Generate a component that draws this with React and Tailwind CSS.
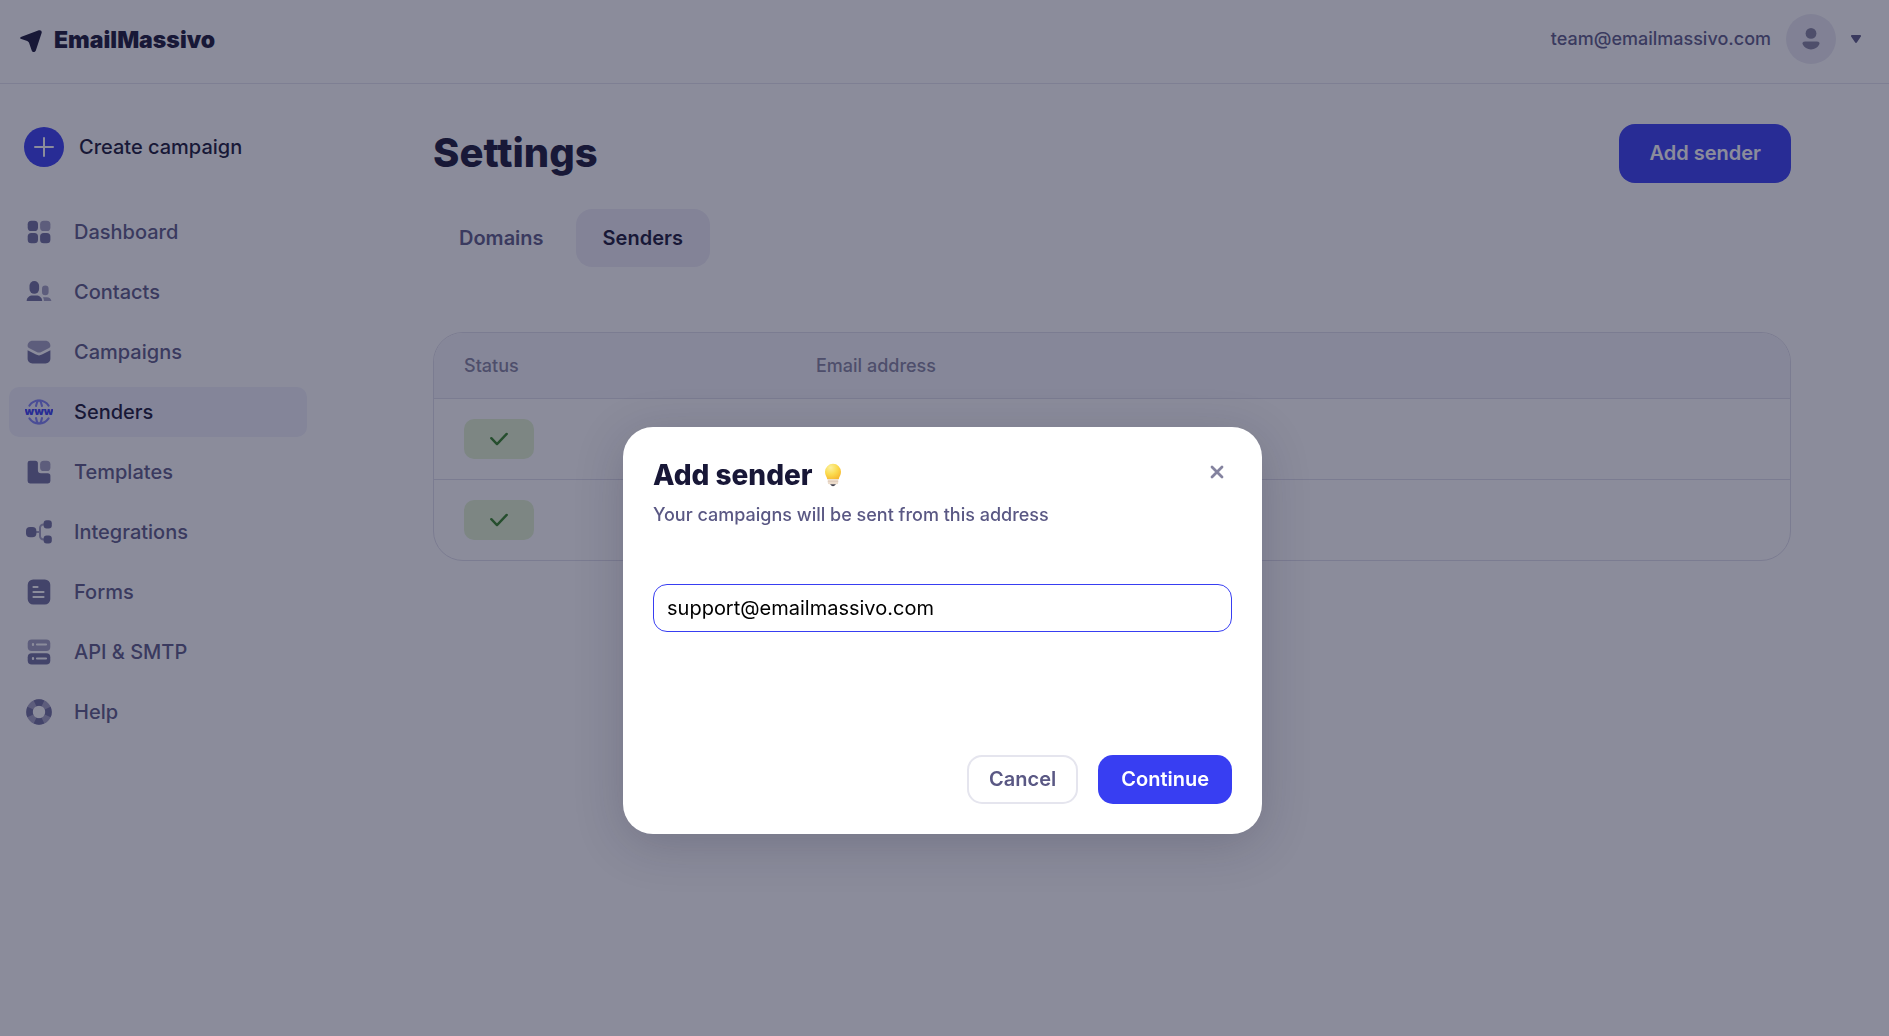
import { useState } from 'react';

const navItems = [
  { label: 'Dashboard', icon: DashboardIcon },
  { label: 'Contacts', icon: ContactsIcon },
  { label: 'Campaigns', icon: CampaignsIcon },
  { label: 'Senders', icon: SendersIcon },
  { label: 'Templates', icon: TemplatesIcon },
  { label: 'Integrations', icon: IntegrationsIcon },
  { label: 'Forms', icon: FormsIcon },
  { label: 'API & SMTP', icon: ApiIcon },
  { label: 'Help', icon: HelpIcon },
];

const senders = [{ id: 1 }, { id: 2 }];

function Icon({ children }) {
  return (
    <svg viewBox="0 0 28 28" className="w-7 h-7 shrink-0" fill="#6f6e9d" aria-hidden="true">
      {children}
    </svg>
  );
}

function DashboardIcon() {
  return (
    <Icon>
      <rect x="2.7" y="2.7" width="10.3" height="10.3" rx="3.6" />
      <rect x="15.1" y="2.7" width="10.3" height="10.3" rx="3.6" fill="#a3a1c0" />
      <rect x="2.7" y="15" width="10.3" height="10.3" rx="3.6" />
      <rect x="15.1" y="15" width="10.3" height="10.3" rx="3.6" />
    </Icon>
  );
}

function ContactsIcon() {
  return (
    <Icon>
      <rect x="4.5" y="3" width="9.6" height="12.8" rx="4.8" />
      <path d="M1.6 23c.2-3.6 2.8-5.5 6-5.5h3.6c3.2 0 5.8 1.9 6 5.5Z" />
      <rect x="17" y="7.6" width="6.6" height="9.6" rx="3.3" fill="#a3a1c0" />
      <path d="M18 19.2h3.8c2.6 0 4.3 1.4 4.6 3.8h-7.5c0-1.6-.3-2.8-.9-3.8Z" fill="#a3a1c0" />
    </Icon>
  );
}

function CampaignsIcon() {
  return (
    <Icon>
      <path d="M7.5 2.8h13c2.8 0 4.9 2.2 4.9 5 0 1-.4 1.7-1.3 2.2l-7.8 4a5 5 0 0 1-4.6 0L3.9 10c-.9-.5-1.3-1.2-1.3-2.2 0-2.8 2.1-5 4.9-5Z" fill="#a3a1c0" />
      <path d="M2.6 12.2 11 16.6a6.5 6.5 0 0 0 6 0l8.4-4.4v8.3c0 2.8-2 4.9-4.9 4.9h-13c-2.9 0-4.9-2.1-4.9-4.9Z" />
    </Icon>
  );
}

function SendersIcon() {
  return (
    <Icon>
      <g fill="none" stroke="#7d80f5" strokeWidth="2.1" strokeLinecap="round">
        <path d="M4.4 7.6a11.6 11.6 0 0 1 19.2 0M4.4 20.4a11.6 11.6 0 0 0 19.2 0" />
        <path d="M11 8c.4-2.2 1.1-4.2 2-5.4M17 8c-.4-2.2-1.1-4.2-2-5.4M11 20c.4 2.2 1.1 4.2 2 5.4M17 20c-.4 2.2-1.1 4.2-2 5.4" />
      </g>
      <text x="14" y="17" textAnchor="middle" className="text-[11px] font-black" fill="#383ef2">www</text>
    </Icon>
  );
}

function TemplatesIcon() {
  return (
    <Icon>
      <path d="M5 2.7h5.3a2.6 2.6 0 0 1 2.6 2.6v6.9a3 3 0 0 0 3 3h6.9a2.6 2.6 0 0 1 2.6 2.6v5.2a2.4 2.4 0 0 1-2.4 2.4H5a2.4 2.4 0 0 1-2.4-2.4V5.1A2.4 2.4 0 0 1 5 2.7Z" />
      <rect x="15.1" y="2.7" width="10.3" height="10.3" rx="3.6" fill="#a3a1c0" />
    </Icon>
  );
}

function IntegrationsIcon() {
  return (
    <Icon>
      <path d="M11 14h4M20 6.5h-1.5A3.5 3.5 0 0 0 15 10v8a3.5 3.5 0 0 0 3.5 3.5H20" fill="none" stroke="#a3a1c0" strokeWidth="2" />
      <rect x="1" y="9" width="10.4" height="10.2" rx="4" />
      <rect x="18.6" y="2.3" width="8.2" height="8.2" rx="3" />
      <rect x="18.6" y="17.4" width="8.2" height="8.2" rx="3" />
    </Icon>
  );
}

function FormsIcon() {
  return (
    <Icon>
      <rect x="2.7" y="1.4" width="22.6" height="25.2" rx="5.5" />
      <path d="M8.5 9h4M8.5 14h10M8.5 19h10" stroke="#fff" strokeWidth="2.2" strokeLinecap="round" />
    </Icon>
  );
}

function ApiIcon() {
  return (
    <Icon>
      <rect x="2.7" y="1.5" width="22.6" height="11.4" rx="4" fill="#a3a1c0" />
      <rect x="2.7" y="15.2" width="22.6" height="11.4" rx="4" />
      <path d="M8 6v1M12 6.5h9M8 20v1M12 20.5h9" stroke="#fff" strokeWidth="2.2" strokeLinecap="round" />
    </Icon>
  );
}

function HelpIcon() {
  return (
    <Icon>
      <circle cx="14" cy="14" r="9.5" fill="none" stroke="#a3a1c0" strokeWidth="6.5" />
      <circle cx="14" cy="14" r="9.5" fill="none" stroke="#6f6e9d" strokeWidth="6.5" pathLength="80" strokeDasharray="11 9" strokeDashoffset="5.5" />
    </Icon>
  );
}

function BulbIcon() {
  return (
    <svg viewBox="0 0 24 24" className="w-6 h-6" aria-hidden="true">
      <defs>
        <radialGradient id="bulb" cx="0.35" cy="0.25" r="0.85">
          <stop offset="0" stopColor="#fbf0a0" />
          <stop offset="0.5" stopColor="#fbdc50" />
          <stop offset="1" stopColor="#f6b52c" />
        </radialGradient>
      </defs>
      <path d="M12 .8a8 8 0 0 1 8 8c0 3.3-1.7 4.7-2.3 7.5H6.3C5.7 13.5 4 12.1 4 8.8a8 8 0 0 1 8-8Z" fill="url(#bulb)" />
      <path d="M6.8 16.3h10.4v3.4a1.5 1.5 0 0 1-1.5 1.5H8.3a1.5 1.5 0 0 1-1.5-1.5Z" fill="#ecdccb" />
      <path d="M6.8 18.3h10.4" stroke="#d8c4b4" strokeWidth=".7" />
      <path d="M9 21.2h6l-1.6 1.6c-.8.5-2 .5-2.8 0Z" fill="#45424d" />
    </svg>
  );
}

function Header() {
  return (
    <header className="flex items-center justify-between h-21 pl-5 pr-7 pb-1.5 border-b border-[#e5e5ee]">
      <a href="#" className="flex items-center gap-3 pt-1 text-[23px] font-black text-[#181737]">
        <svg viewBox="0 0 22 22" className="w-[22px] h-[22px]" fill="#181737" aria-hidden="true">
          <path d="M1.5 6.7 18.8.3c1.8-.6 3.2.6 2.9 2.4L16 19.9c-.7 2.5-3.3 2.7-4.3.5L9.2 13.2C8.9 12.2 8.3 11.6 7.2 11L1.4 9.1C-.3 8.5-.2 7.3 1.5 6.7Z" />
        </svg>
        EmailMassivo
      </a>
      <button type="button" className="flex items-center text-lg font-medium text-[#5c5a86]">
        team@emailmassivo.com
        <span className="flex items-center justify-center w-[50px] h-[50px] mx-[15px] rounded-full bg-[#eae9f2]">
          <svg viewBox="0 0 22 22" className="w-[22px] h-[22px]" fill="#84839f" aria-hidden="true">
            <circle cx="11" cy="5.4" r="5.4" />
            <path d="M5.2 13.6h11.6c2.4 0 3.4 1.4 2.4 3-1.3 2.8-4.5 4.8-8.2 4.8s-6.9-2-8.2-4.8c-1-1.6 0-3 2.4-3Z" />
          </svg>
        </span>
        <svg viewBox="0 0 10 8" className="w-2.5 h-2" fill="#5c5a86" aria-hidden="true">
          <path d="M1.2 0h7.6c1.2 0 1.5.9.9 1.7L6 7.3c-.5.8-1.5.8-2 0L.3 1.7C-.3.9 0 0 1.2 0Z" />
        </svg>
      </button>
    </header>
  );
}

function Sidebar() {
  return (
    <aside className="w-[335px] shrink-0 pt-[43px] pl-[9px] pr-7 text-xl font-medium">
      <button type="button" className="flex items-center gap-[15px] pl-[15px] text-[#181737]">
        <span className="flex items-center justify-center w-10 h-10 rounded-full bg-[#383ef2]">
          <svg viewBox="0 0 20 20" className="w-5 h-5" stroke="#fff" strokeWidth="2" strokeLinecap="round" aria-hidden="true">
            <path d="M10 1v18M1 10h18" />
          </svg>
        </span>
        Create campaign
      </button>
      <nav className="flex flex-col gap-2.5 mt-10">
        {navItems.map(({ label, icon: NavIcon }) => (
          <a
            key={label}
            href="#"
            className={`flex items-center gap-[21px] h-[50px] pl-4 rounded-[10px] ${label === 'Senders' ? 'bg-[#f0f1fb] text-[#181737]' : 'text-[#5c5a86]'}`}
          >
            <NavIcon />
            {label}
          </a>
        ))}
      </nav>
    </aside>
  );
}

function SendersTable() {
  return (
    <div className="mt-[65px] border border-[#dfdeea] rounded-[30px] overflow-hidden">
      <table className="w-full table-fixed text-left">
        <thead className="bg-[#f5f5fa] text-lg text-[#84839f]">
          <tr className="h-[65px]">
            <th className="w-[352px] pt-0.5 pl-[30px] font-medium">Status</th>
            <th className="pt-0.5 pl-[30px] font-medium">Email address</th>
          </tr>
        </thead>
        <tbody>
          {senders.map(sender => (
            <tr key={sender.id} className="h-[81px] border-t border-[#dfdeea]">
              <td className="pl-[30px]">
                <span className="flex items-center justify-center w-[70px] h-10 rounded-[10px] bg-[#e2f3cf]">
                  <svg viewBox="0 0 18 14" className="w-[18px] h-3.5" fill="none" stroke="#358325" strokeWidth="2.4" strokeLinecap="round" strokeLinejoin="round" role="img" aria-label="Verified">
                    <path d="m1.3 6.2 5.7 5.9L16.7 1.9" />
                  </svg>
                </span>
              </td>
              <td />
            </tr>
          ))}
        </tbody>
      </table>
    </div>
  );
}

function AddSenderModal({ onClose }) {
  const [email, setEmail] = useState('support@emailmassivo.com');

  return (
    <div className="fixed inset-0 flex items-start justify-center pt-[427px] pl-4 pr-5 bg-[#171937]/50">
      <form
        role="dialog"
        aria-labelledby="modal-title"
        onSubmit={e => e.preventDefault()}
        className="w-full max-w-[639px] p-[30px] bg-white rounded-[30px] shadow-[0_10px_50px_rgba(24,23,55,0.2)]"
      >
        <div className="flex items-start justify-between">
          <h2 id="modal-title" className="flex items-center gap-2 text-[28px] leading-9 font-extrabold text-[#181737]">
            Add sender <BulbIcon />
          </h2>
          <button type="button" onClick={onClose} aria-label="Close" className="flex items-center justify-center w-[30px] h-[30px]">
            <svg viewBox="0 0 14 14" className="w-3.5 h-3.5" stroke="#84839f" strokeWidth="2.8" strokeLinecap="round" aria-hidden="true">
              <path d="m2 2 10 10M12 2 2 12" />
            </svg>
          </button>
        </div>
        <label htmlFor="sender-email" className="block mt-2 text-lg font-medium text-[#5a5884]">
          Your campaigns will be sent from this address
        </label>
        <input
          id="sender-email"
          type="email"
          value={email}
          onChange={e => setEmail(e.target.value)}
          className="w-full h-12 mt-[55px] px-[13px] rounded-[14px] border border-[#383ef2] text-xl text-black outline-none"
        />
        <div className="flex justify-end gap-5 mt-[123px] text-xl font-semibold">
          <button type="button" onClick={onClose} className="h-[49px] px-5 pb-0.5 rounded-[15px] border-2 border-[#e5e5ee] text-[#5a5884]">
            Cancel
          </button>
          <button type="submit" className="h-[49px] px-[23px] pb-0.5 rounded-[15px] bg-[#383ef2] text-white">
            Continue
          </button>
        </div>
      </form>
    </div>
  );
}

export default function App() {
  const [showModal, setShowModal] = useState(true);

  return (
    <div className="min-h-screen bg-white font-['Inter',sans-serif]">
      <Header />
      <div className="flex">
        <Sidebar />
        <main className="flex-1 pt-10 px-[98px]">
          <div className="flex items-start justify-between">
            <h1 className="text-[40px] leading-[57px] font-extrabold text-[#181737]">Settings</h1>
            <button type="button" onClick={() => setShowModal(true)} className="h-[59px] px-[30px] pb-0.5 rounded-2xl bg-[#383ef2] text-xl font-semibold text-white">
              Add sender
            </button>
          </div>
          <div className="flex gap-1.5 mt-[26px] text-xl font-semibold">
            <button type="button" className="h-[58px] px-[26px] rounded-2xl text-[#5c5a86]">Domains</button>
            <button type="button" className="h-[58px] px-[27px] rounded-2xl bg-[#eeedf7] text-[#181737]">Senders</button>
          </div>
          <SendersTable />
        </main>
      </div>
      {showModal && <AddSenderModal onClose={() => setShowModal(false)} />}
    </div>
  );
}
